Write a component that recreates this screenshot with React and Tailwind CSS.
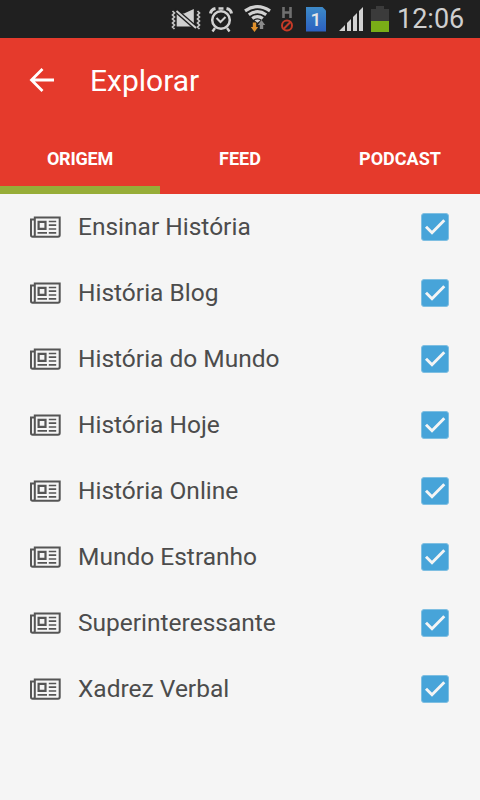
const sources = [
  'Ensinar História',
  'História Blog',
  'História do Mundo',
  'História Hoje',
  'História Online',
  'Mundo Estranho',
  'Superinteressante',
  'Xadrez Verbal',
];

const tabs = ['ORIGEM', 'FEED', 'PODCAST'];

function MutedVibrateIcon() {
  return (
    <svg className="w-8 h-[38px]" viewBox="170 0 32 38" fill="none">
      <path d="M176.7 13.5h7.3l9.8-4.5v17.5l-9.8 0h-7.3z" fill="#d0d0d0" />
      <path d="M174.8 9.5l22.5 19.8" stroke="#202020" strokeWidth="4.6" />
      <path d="M176.5 11l19.5 17" stroke="#d0d0d0" strokeWidth="1.9" />
      <path d="M172.5 11l2 2-2 2 2 2-2 2 2 2-2 2 2 2-2 2 2 2M197.5 11l2 2-2 2 2 2-2 2 2 2-2 2 2 2-2 2 2 2" stroke="#c4c4c4" strokeWidth="1.7" />
    </svg>
  );
}

function AlarmIcon() {
  return (
    <svg className="w-6 h-[38px]" viewBox="209 0 24 38" fill="none" stroke="#d2d2d2">
      <circle cx="221" cy="20" r="8.8" strokeWidth="2.5" />
      <path d="M216.5 18l4 4 5-5" strokeWidth="2" />
      <path d="M210.5 13.5q.5-4 5-5M231.5 13.5q-.5-4-5-5" strokeWidth="3" />
      <path d="M215 28l-2.5 3.5M227 28l2.5 3.5M218.5 8.5h5" strokeWidth="2.4" />
    </svg>
  );
}

function WifiIcon() {
  return (
    <svg className="w-7 h-[38px]" viewBox="244 0 28 38" fill="none">
      <g stroke="#d2d2d2" strokeWidth="3.2">
        <path d="M245 10.8q12.5-8.4 25 0" />
        <path d="M248.8 14.7q8.700-6 17.400 0" />
        <path d="M252.2 18.500q5.300-3.800 10.600 0" />
      </g>
      <path d="M254.500 20.300q3-1.800 6 0l-3 2.500z" fill="#d2d2d2" />
      <path d="M252.8 22.500h3.400v4.500h2l-3.700 5-3.700-5h2z" fill="#e0912c" />
      <path d="M259.8 29h3.400v-4h2l-3.700-5-3.700 5h2z" fill="#8b8b8b" />
    </svg>
  );
}

function BlockedIcon() {
  return (
    <svg className="w-3 h-[38px]" viewBox="281 0 12 38" fill="none">
      <path d="M283.5 7v11M290.5 7v11M283.5 12.5h7" stroke="#707070" strokeWidth="2.6" />
      <circle cx="287" cy="25.5" r="5" stroke="#c63a27" strokeWidth="2" />
      <path d="M283.8 28.7l6.4-6.4" stroke="#c63a27" strokeWidth="2" />
    </svg>
  );
}

function SignalIcon() {
  return (
    <svg className="w-[25px] h-[38px]" viewBox="339 0 25 38" fill="#d2d2d2">
      <path d="M339 31l6-6v6zM347 23l4-4v12h-4zM353 17l4-4v18h-4zM359 11l4-4v24h-4z" />
    </svg>
  );
}

function BatteryIcon() {
  return (
    <svg className="w-[18px] h-[38px]" viewBox="371 0 18 38">
      <path d="M376 6h8v3h5v12h-18V9h5z" fill="#3b3b3b" />
      <path d="M371 21h18v11h-18z" fill="#7aad17" />
    </svg>
  );
}

function StatusBar() {
  return (
    <div className="flex h-[38px] items-center bg-[#202020] pl-[170px]">
      <MutedVibrateIcon />
      <div className="ml-[7px]"><AlarmIcon /></div>
      <div className="ml-[11px]"><WifiIcon /></div>
      <div className="ml-[9px]"><BlockedIcon /></div>
      {/* SIM card slot */}
      <div className="ml-[13px] flex h-[25px] w-5 items-center justify-center bg-linear-to-b from-[#3e8ac8] to-[#2c5fc0] text-[19px] leading-none font-medium text-[#e6e6e6] [clip-path:polygon(0_0,80%_0,100%_16%,100%_100%,0_100%)]">
        1
      </div>
      <div className="ml-[13px]"><SignalIcon /></div>
      <div className="ml-[7px]"><BatteryIcon /></div>
      <span className="ml-[8px] text-[27px] leading-[38px] text-[#cfcfcf]">12:06</span>
    </div>
  );
}

function NewspaperIcon() {
  return (
    <svg className="h-[22px] w-[31px]" viewBox="0 -0.5 31 22" fill="none" stroke="#555555">
      <path d="M4.8 3H1v15.5q0 1.700 1.700 1.700h25.300q1.700 0 1.700-1.700V1H4.8v17.5q0 1.700-1.800 1.700" strokeWidth="2" />
      <path d="M8.6 5.3h6.900v7H8.6z" strokeWidth="2.2" />
      <path d="M18.8 5h7.4M18.8 8.7h7.4M18.8 12.5h7.4M7.5 16.3h9.5M18.8 16.3h7.4" strokeWidth="1.7" />
    </svg>
  );
}

function Checkbox() {
  return (
    <span className="flex size-7 items-center justify-center rounded-[3px] border border-[#7fbfe2] bg-[#47a4d9]">
      <svg className="size-7 shrink-0" viewBox="0 0 28 28" fill="none" stroke="#f5f5f5" strokeWidth="2.9">
        <path d="M5 13.7l6 6L23.3 7.2" />
      </svg>
    </span>
  );
}

export default function App() {
  return (
    <div className="h-[800px] w-[480px] overflow-hidden bg-[#f5f5f5] font-[Roboto,sans-serif]">
      <StatusBar />

      {/* Header */}
      <header className="bg-[#e53a2c] text-white">
        <div className="flex h-[84px] items-center pl-[29px]">
          <svg className="h-6 w-[26px]" viewBox="0 0 26 24" fill="none" stroke="white" strokeWidth="2.8">
            <path d="M25 12H3M13.5 1L2.5 12l11 11" />
          </svg>
          <h1 className="ml-[35px] pt-px text-[30px] leading-none">Explorar</h1>
        </div>
        <nav className="grid h-[72px] grid-cols-3">
          {tabs.map((tab, i) => (
            <button
              key={tab}
              className={`border-b-8 pt-[9px] text-[18px] font-bold ${
                i === 0 ? 'border-[#97ad38] tracking-[-0.2px]' : 'border-transparent'
              }`}
            >
              {tab}
            </button>
          ))}
        </nav>
      </header>

      {/* Source list */}
      <ul>
        {sources.map((name) => (
          <li key={name} className="flex h-[66px] items-center pr-[31px] pl-[30px]">
            <NewspaperIcon />
            <span className="ml-[17px] flex-1 text-[24.5px] leading-6 text-[#4c4c4c]">{name}</span>
            <Checkbox />
          </li>
        ))}
      </ul>
    </div>
  );
}
